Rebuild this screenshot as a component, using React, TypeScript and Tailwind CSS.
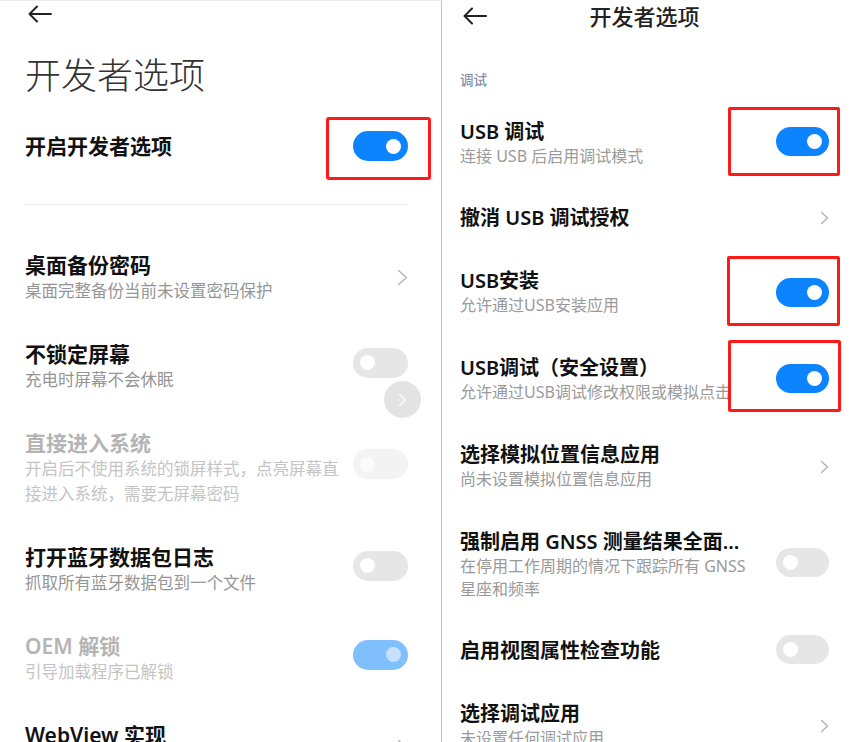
import React from "react";

type TState = "on" | "off" | "dis-off" | "dis-on";

function Toggle({ state, small }: { state: TState; small?: boolean }) {
  const track =
    state === "on"
      ? "bg-[#0d84ff]"
      : state === "off"
      ? "bg-[#e6e6e6]"
      : state === "dis-on"
      ? "bg-[#80bffe]"
      : "bg-[#f3f3f3]";
  const knob =
    state === "dis-on" ? "bg-[#c6e1fd]" : state === "dis-off" ? "bg-[#fbfbfb]" : "bg-white";
  const right = state === "on" || state === "dis-on";
  return (
    <div
      className={`flex shrink-0 items-center rounded-full ${small ? "w-[53px] h-[29px]" : "w-[55px] h-[30px]"} ${track} ${
        right ? "justify-end pr-[7px]" : "justify-start pl-[7px]"
      }`}
    >
      <div className={`w-[15px] h-[15px] rounded-full ${knob}`} />
    </div>
  );
}

function BackArrow() {
  return (
    <svg width="25" height="18" viewBox="0 0 25 18" fill="none">
      <path d="M24 9H2.5M10 1.5L2.5 9L10 16.5" stroke="#222" strokeWidth="2" strokeLinecap="round" strokeLinejoin="round" />
    </svg>
  );
}

function Chevron({ small, color = "#b3b3b3" }: { small?: boolean; color?: string }) {
  return small ? (
    <svg width="9" height="14" viewBox="0 0 9 14" fill="none" className="shrink-0">
      <path d="M1.5 1.5L7.5 7L1.5 12.5" stroke={color} strokeWidth="1.4" strokeLinecap="round" strokeLinejoin="round" />
    </svg>
  ) : (
    <svg width="11" height="17" viewBox="0 0 11 17" fill="none" className="shrink-0">
      <path d="M1.5 1.5L9.5 8.5L1.5 15.5" stroke={color} strokeWidth="1.4" strokeLinecap="round" strokeLinejoin="round" />
    </svg>
  );
}

function LeftItem({
  title,
  sub,
  disabled,
  right,
}: {
  title: string;
  sub: React.ReactNode;
  disabled?: boolean;
  right: React.ReactNode;
}) {
  return (
    <div className="flex items-center justify-between py-[19px]">
      <div className="min-w-0">
        <div className={`text-[21px] leading-[26px] font-semibold ${disabled ? "text-[#b4b4b4]" : "text-[#111]"}`}>{title}</div>
        <div className={`text-[16.5px] leading-[25px] ${disabled ? "text-[#c4c4c4]" : "text-[#959595]"}`}>{sub}</div>
      </div>
      {right}
    </div>
  );
}

function RightItem({
  title,
  sub,
  right,
  clip,
  box,
}: {
  title: string;
  sub?: React.ReactNode;
  right: React.ReactNode;
  clip?: boolean;
  box?: React.ReactNode;
}) {
  return (
    <div className={`relative flex items-center justify-between ${sub ? "py-[19px]" : "h-[62px]"}`}>
      <div className={`min-w-0 ${clip ? "w-[268px] overflow-hidden" : ""}`}>
        <div className="text-[20px] leading-[26px] font-semibold text-[#111] whitespace-nowrap">{title}</div>
        {sub && <div className={`text-[16px] leading-[23px] text-[#9a9a9a] ${clip ? "whitespace-nowrap" : ""}`}>{sub}</div>}
      </div>
      {right}
      {box}
    </div>
  );
}

export default function App() {
  return (
    <div className="flex w-[856px] h-[742px] bg-white overflow-hidden font-['Noto_Sans','Noto_Sans_CJK_SC',sans-serif]">
      {/* Left pane */}
      <div className="relative w-[442px] shrink-0 h-full border-r border-r-[#c4c4c4] border-t border-t-[#ededed] pl-[25px] pr-[33px] overflow-hidden">
        <div className="h-[25px] flex items-center pl-[2px]">
          <BackArrow />
        </div>
        <div className="h-[100px] flex items-center text-[36px] leading-none font-light text-[#333]">开发者选项</div>
        <div className="relative h-[42px] flex items-center justify-between">
          <div className="text-[21px] font-semibold text-[#111]">开启开发者选项</div>
          <div className="mb-[2px]">
            <Toggle state="on" />
          </div>
          <div className="absolute left-[301px] top-[-9px] w-[105px] h-[63px] border-[3px] border-[#ff1a1a] rounded-[3px]" />
        </div>
        <div className="mt-[36px] h-px bg-[#e8e8e8]" />
        <div className="mt-[28px]">
          <LeftItem title="桌面备份密码" sub="桌面完整备份当前未设置密码保护" right={<Chevron />} />
          <LeftItem
            title="不锁定屏幕"
            sub="充电时屏幕不会休眠"
            right={
              <div className="mb-[8px]">
                <Toggle state="off" />
              </div>
            }
          />
          <LeftItem
            title="直接进入系统"
            disabled
            sub={
              <>
                开启后不使用系统的锁屏样式，点亮屏幕直
                <br />
                接进入系统，需要无屏幕密码
              </>
            }
            right={
              <div className="mb-[8px]">
                <Toggle state="dis-off" />
              </div>
            }
          />
          <LeftItem
            title="打开蓝牙数据包日志"
            sub="抓取所有蓝牙数据包到一个文件"
            right={
              <div className="mb-[8px]">
                <Toggle state="off" />
              </div>
            }
          />
          <LeftItem
            title="OEM 解锁"
            disabled
            sub="引导加载程序已解锁"
            right={
              <div className="mb-[8px]">
                <Toggle state="dis-on" />
              </div>
            }
          />
          <LeftItem title="WebView 实现" sub="Android System WebView" right={<Chevron />} />
        </div>
        <div className="absolute left-[384px] top-[380px] w-[37px] h-[37px] rounded-full bg-[#e3e3e3] flex items-center justify-center">
          <Chevron small color="#ffffff" />
        </div>
      </div>

      {/* Right pane */}
      <div className="flex-1 h-full pl-[18px] pr-[27px] overflow-hidden">
        <div className="h-[32px] grid grid-cols-[1fr_auto_1fr] items-center">
          <div className="pl-[2px] flex items-center">
            <BackArrow />
          </div>
          <div className="text-[22px] leading-none font-medium text-[#222]">开发者选项</div>
          <div />
        </div>
        <div className="mt-[36px] h-[24px] leading-[24px] text-[13.5px] font-medium text-[#878ea6]">调试</div>
        <div className="mt-[8px]">
          <RightItem
            title="USB 调试"
            sub="连接 USB 后启用调试模式"
            right={
              <div className="mb-[5px]">
                <Toggle state="on" small />
              </div>
            }
            box={<div className="absolute left-[268px] top-[7px] w-[112px] h-[69px] border-[3px] border-[#ff1a1a] rounded-[2px]" />}
          />
          <RightItem title="撤消 USB 调试授权" right={<Chevron small />} />
          <RightItem
            title="USB安装"
            sub="允许通过USB安装应用"
            right={<Toggle state="on" small />}
            box={<div className="absolute left-[267px] top-[7px] w-[113px] h-[70px] border-[3px] border-[#ff1a1a] rounded-[2px]" />}
          />
          <RightItem
            title="USB调试（安全设置）"
            sub="允许通过USB调试修改权限或模拟点击"
            clip
            right={
              <div className="mb-[3px]">
                <Toggle state="on" small />
              </div>
            }
            box={<div className="absolute left-[268px] top-[4px] w-[113px] h-[72px] border-[3px] border-[#ff1a1a] rounded-[2px]" />}
          />
          <RightItem title="选择模拟位置信息应用" sub="尚未设置模拟位置信息应用" right={<Chevron small />} />
          <RightItem
            title="强制启用 GNSS 测量结果全面..."
            sub={
              <>
                在停用工作周期的情况下跟踪所有 GNSS
                <br />
                星座和频率
              </>
            }
            right={
              <div className="mb-[6px]">
                <Toggle state="off" small />
              </div>
            }
          />
          <RightItem
            title="启用视图属性检查功能"
            right={
              <div className="mb-[4px]">
                <Toggle state="off" small />
              </div>
            }
          />
          <RightItem title="选择调试应用" sub="未设置任何调试应用" right={<Chevron small />} />
        </div>
      </div>
    </div>
  );
}
